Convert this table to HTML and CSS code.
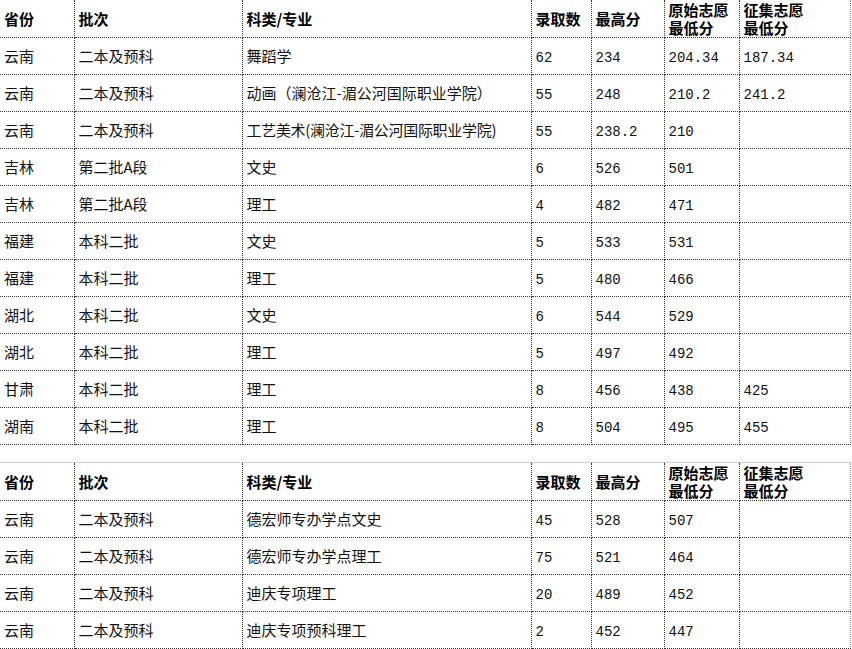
FILE: index.html
```html
<!DOCTYPE html>
<html lang="zh-CN">
<head>
<meta charset="utf-8">
<title>录取分数</title>
<link rel="stylesheet" href="styles.css">
</head>
<body>
<table class="score first">
  <colgroup>
    <col class="c1"><col class="c2"><col class="c3"><col class="c4"><col class="c5"><col class="c6"><col class="c7">
  </colgroup>
  <thead>
    <tr class="head">
      <th>省份</th><th>批次</th><th>科类/专业</th><th>录取数</th><th>最高分</th><th><span class="hl">原始志愿</span><span class="hl">最低分</span></th><th><span class="hl">征集志愿</span><span class="hl">最低分</span></th>
    </tr>
  </thead>
  <tbody>
    <tr><td>云南</td><td>二本及预科</td><td>舞蹈学</td><td class="num">62</td><td class="num">234</td><td class="num">204.34</td><td class="num">187.34</td></tr>
    <tr><td>云南</td><td>二本及预科</td><td>动画（澜沧江-湄公河国际职业学院）</td><td class="num">55</td><td class="num">248</td><td class="num">210.2</td><td class="num">241.2</td></tr>
    <tr><td>云南</td><td>二本及预科</td><td class="tight">工艺美术(澜沧江-湄公河国际职业学院)</td><td class="num">55</td><td class="num">238.2</td><td class="num">210</td><td class="num"></td></tr>
    <tr><td>吉林</td><td>第二批A段</td><td>文史</td><td class="num">6</td><td class="num">526</td><td class="num">501</td><td class="num"></td></tr>
    <tr><td>吉林</td><td>第二批A段</td><td>理工</td><td class="num">4</td><td class="num">482</td><td class="num">471</td><td class="num"></td></tr>
    <tr><td>福建</td><td>本科二批</td><td>文史</td><td class="num">5</td><td class="num">533</td><td class="num">531</td><td class="num"></td></tr>
    <tr><td>福建</td><td>本科二批</td><td>理工</td><td class="num">5</td><td class="num">480</td><td class="num">466</td><td class="num"></td></tr>
    <tr><td>湖北</td><td>本科二批</td><td>文史</td><td class="num">6</td><td class="num">544</td><td class="num">529</td><td class="num"></td></tr>
    <tr><td>湖北</td><td>本科二批</td><td>理工</td><td class="num">5</td><td class="num">497</td><td class="num">492</td><td class="num"></td></tr>
    <tr><td>甘肃</td><td>本科二批</td><td>理工</td><td class="num">8</td><td class="num">456</td><td class="num">438</td><td class="num">425</td></tr>
    <tr><td>湖南</td><td>本科二批</td><td>理工</td><td class="num">8</td><td class="num">504</td><td class="num">495</td><td class="num">455</td></tr>
  </tbody>
</table>

<table class="score second">
  <colgroup>
    <col class="c1"><col class="c2"><col class="c3"><col class="c4"><col class="c5"><col class="c6"><col class="c7">
  </colgroup>
  <thead>
    <tr class="head">
      <th>省份</th><th>批次</th><th>科类/专业</th><th>录取数</th><th>最高分</th><th><span class="hl">原始志愿</span><span class="hl">最低分</span></th><th><span class="hl">征集志愿</span><span class="hl">最低分</span></th>
    </tr>
  </thead>
  <tbody>
    <tr><td>云南</td><td>二本及预科</td><td>德宏师专办学点文史</td><td class="num">45</td><td class="num">528</td><td class="num">507</td><td class="num"></td></tr>
    <tr><td>云南</td><td>二本及预科</td><td>德宏师专办学点理工</td><td class="num">75</td><td class="num">521</td><td class="num">464</td><td class="num"></td></tr>
    <tr><td>云南</td><td>二本及预科</td><td>迪庆专项理工</td><td class="num">20</td><td class="num">489</td><td class="num">452</td><td class="num"></td></tr>
    <tr><td>云南</td><td>二本及预科</td><td>迪庆专项预科理工</td><td class="num">2</td><td class="num">452</td><td class="num">447</td><td class="num"></td></tr>
  </tbody>
</table>
</body>
</html>
```

FILE: styles.css
```css
html, body {
  margin: 0;
  padding: 0;
  background: #ffffff;
}

body {
  font-family: "Noto Sans CJK SC", "Noto Sans", sans-serif;
  font-size: 15px;
  color: #111111;
}

.score {
  border-collapse: collapse;
  table-layout: fixed;
  width: 850px;
}

.second {
  margin-top: 17px;
}

.c1 { width: 74px; }
.c2 { width: 168px; }
.c3 { width: 289px; }
.c4 { width: 60px; }
.c5 { width: 73px; }
.c6 { width: 75px; }
.c7 { width: 111px; }

.score th,
.score td {
  padding: 0 0 0 4px;
  text-align: left;
  vertical-align: middle;
  line-height: 18px;
  white-space: nowrap;
  overflow: hidden;
  border-right: 1px dotted #333333;
  border-bottom: 1px dotted #333333;
}

.score th:last-child,
.score td:last-child {
  border-right: 1px dotted #9a9a9a;
}

.score th {
  font-weight: bold;
  color: #000000;
  height: 36px;
  padding-top: 1px;
}

.hl {
  display: block;
  height: 18px;
  line-height: 18px;
}

.first th {
  border-top: none;
}

.second th {
  border-top: 1px solid #cfcfcf;
}

.score td {
  height: 36px;
}

.score td.num {
  font-family: "Liberation Mono", "DejaVu Sans Mono", monospace;
  font-size: 14px;
  padding-top: 3px;
  height: 33px;
}

.tight {
  letter-spacing: -0.3px;
}
```
